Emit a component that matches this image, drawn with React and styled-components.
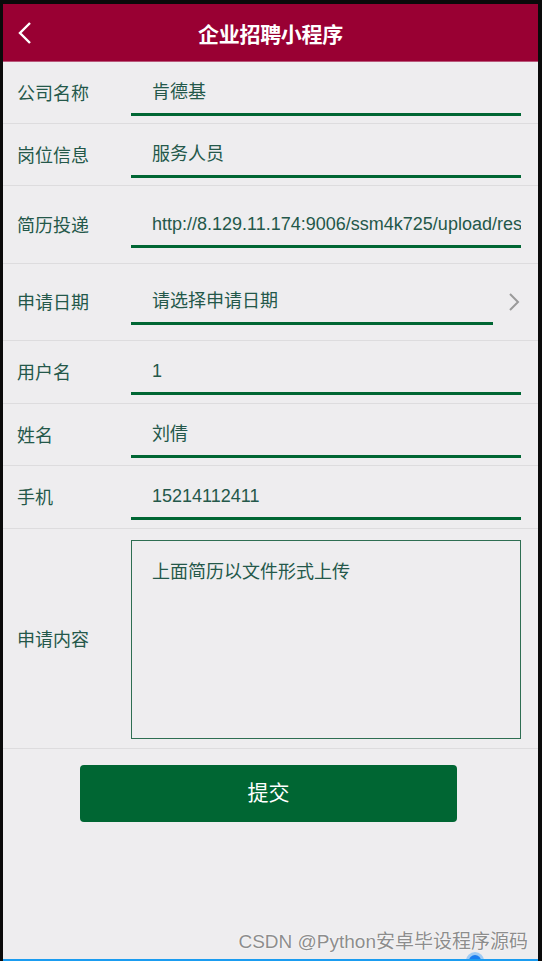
import React from "react";
import styled, { createGlobalStyle } from "styled-components";

const Global = createGlobalStyle`
  html, body {
    margin: 0;
    padding: 0;
    background: #0a0a0a;
  }
  body {
    font-family: "Liberation Sans", "Noto Sans CJK SC", sans-serif;
  }
`;

const Screen = styled.div`
  position: relative;
  margin: 4px 4px 0 3px;
  height: 955px;
  background: #eeedef;
  border-bottom: 2px solid #1a9cf0;
  overflow: hidden;
`;

const Header = styled.div`
  height: 57px;
  background: #990033;
  display: flex;
  align-items: center;
  justify-content: center;
  position: relative;
  border-bottom: 1px solid #b8577a;
`;

const Back = styled.div`
  position: absolute;
  left: 12px;
  top: 17px;
  width: 20px;
  height: 24px;
`;

const Title = styled.h1`
  margin: 0;
  color: #fff;
  font-size: 21px;
  font-weight: bold;
  font-family: "Noto Sans CJK SC", sans-serif;
  letter-spacing: -0.3px;
`;

const Row = styled.div`
  display: flex;
  align-items: center;
  padding: ${(p) => p.$pad || "12px 17px 7px 14px"};
  border-bottom: 1px solid #dddcde;
`;

const Label = styled.div`
  width: 114px;
  flex-shrink: 0;
  color: #24584a;
  font-size: 18px;
  margin-top: ${(p) => p.$shift || "-6px"};
`;

const Field = styled.div`
  width: ${(p) => p.$width || "auto"};
  flex: ${(p) => (p.$width ? "none" : "1")};
  border-bottom: 3px solid #006633;
  color: #24584a;
  font-size: 18px;
  line-height: 36px;
  padding-left: 21px;
  white-space: nowrap;
  overflow: hidden;
  box-sizing: border-box;
  height: 42px;
`;

const Chevron = styled.div`
  margin-left: auto;
  margin-top: -4px;
  width: 14px;
  height: 20px;
`;

const TextBox = styled.div`
  flex: 1;
  height: 199px;
  border: 1px solid #2e6e52;
  box-sizing: border-box;
  padding: 18px 20px;
  color: #24584a;
  font-size: 18px;
  line-height: 26px;
`;

const Submit = styled.button`
  display: block;
  margin: 16px 0 0 77px;
  width: 377px;
  height: 57px;
  padding: 0 0 5px;
  border: none;
  border-radius: 4px;
  background: #006633;
  color: #fff;
  font-size: 21px;
  font-family: "Noto Sans CJK SC", sans-serif;
`;

const Watermark = styled.div`
  position: absolute;
  right: 10px;
  bottom: 6px;
  font-size: 19px;
  color: #8d8d8d;
  text-shadow: 0 0 2px #fff, 0 0 1px #fff;
`;

const Dot = styled.div`
  position: absolute;
  left: 466px;
  bottom: -8px;
  width: 12px;
  height: 12px;
  border-radius: 50%;
  background: #1a7ef0;
  box-shadow: 0 0 0 3px rgba(80, 170, 250, 0.5);
`;

const rows = [
  { label: "公司名称", value: "肯德基" },
  { label: "岗位信息", value: "服务人员" },
  { label: "简历投递", value: "http://8.129.11.174:9006/ssm4k725/upload/resume.doc", pad: "20px 17px 15px 14px" },
];

const rows2 = [
  { label: "用户名", value: "1", pad: "12px 17px 8px 14px" },
  { label: "姓名", value: "刘倩" },
  { label: "手机", value: "15214112411", pad: "12px 17px 8px 14px" },
];

function App() {
  return (
    <>
      <Global />
      <Screen>
        <Header>
          <Back>
            <svg width="20" height="24" viewBox="0 0 20 24">
              <path d="M15 2 L5 12 L15 22" fill="none" stroke="#fff" strokeWidth="2.4" />
            </svg>
          </Back>
          <Title>企业招聘小程序</Title>
        </Header>
        {rows.map((r) => (
          <Row key={r.label} $pad={r.pad}>
            <Label>{r.label}</Label>
            <Field>{r.value}</Field>
          </Row>
        ))}
        <Row $pad="19px 17px 15px 14px">
          <Label>申请日期</Label>
          <Field $width="362px">请选择申请日期</Field>
          <Chevron>
            <svg width="14" height="20" viewBox="0 0 14 20">
              <path d="M3 2 L11 10 L3 18" fill="none" stroke="#9a9a9a" strokeWidth="2" />
            </svg>
          </Chevron>
        </Row>
        {rows2.map((r) => (
          <Row key={r.label} $pad={r.pad}>
            <Label>{r.label}</Label>
            <Field>{r.value}</Field>
          </Row>
        ))}
        <Row $pad="11px 17px 9px 14px">
          <Label $shift="-4px">申请内容</Label>
          <TextBox>上面简历以文件形式上传</TextBox>
        </Row>
        <Submit>提交</Submit>
        <Watermark>CSDN @Python安卓毕设程序源码</Watermark>
        <Dot />
      </Screen>
    </>
  );
}

export default App;
